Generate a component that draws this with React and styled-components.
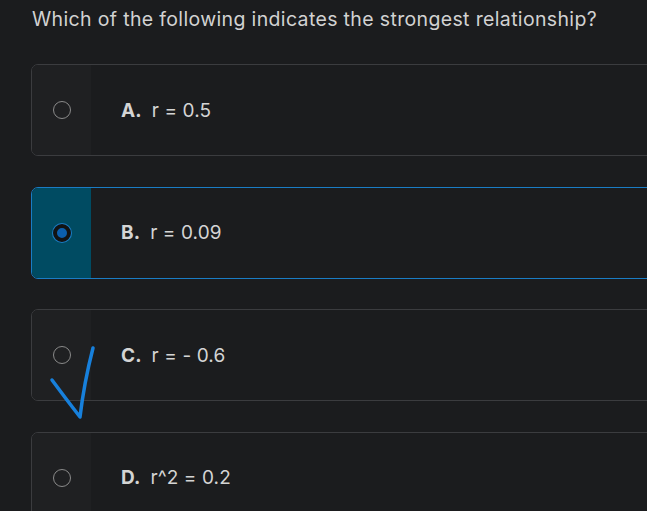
import React from "react";
import styled, { createGlobalStyle } from "styled-components";

const GlobalStyle = createGlobalStyle`
  html, body {
    margin: 0;
    padding: 0;
    background: #1b1c1e;
    overflow: hidden;
  }
`;

const options = [
  { letter: "A.", text: "r = 0.5" },
  { letter: "B.", text: "r = 0.09", selected: true },
  { letter: "C.", text: "r = - 0.6", marked: true },
  { letter: "D.", text: "r^2 = 0.2" },
];

export default function App() {
  return (
    <>
      <GlobalStyle />
      <Page>
        <Question>Which of the following indicates the strongest relationship?</Question>
        <List>
          {options.map((o) => (
            <Card key={o.letter} $selected={o.selected}>
              <RadioCol $selected={o.selected}>
                <Radio $selected={o.selected} />
              </RadioCol>
              <Label>
                <Letter>{o.letter}</Letter>
                {o.text}
              </Label>
              {o.marked && (
                <Check viewBox="0 0 46 72">
                  <path
                    d="M2 33 Q16 52 30 70 Q34 36 43 1"
                    fill="none"
                    stroke="#1780dc"
                    strokeWidth="3.5"
                    strokeLinecap="round"
                    strokeLinejoin="round"
                  />
                </Check>
              )}
            </Card>
          ))}
        </List>
      </Page>
    </>
  );
}

const Page = styled.div`
  width: 647px;
  height: 511px;
  overflow: hidden;
  padding: 6px 0 0 31px;
  box-sizing: border-box;
  font-family: Inter, Roboto, "Liberation Sans", sans-serif;
`;

const Question = styled.div`
  color: #d2d2d2;
  font-size: 19.5px;
  line-height: 26px;
  letter-spacing: 0.35px;
  padding-left: 1px;
  margin-bottom: 32px;
`;

const List = styled.div`
  display: flex;
  flex-direction: column;
  gap: 30.6px;
`;

const Card = styled.div`
  position: relative;
  display: flex;
  align-items: center;
  width: 660px;
  height: 92px;
  box-sizing: border-box;
  border: 1px solid ${(p) => (p.$selected ? "#1a7cc4" : "#3b3c3f")};
  border-radius: 7px;
  background: #1b1c1e;
`;

const RadioCol = styled.div`
  align-self: stretch;
  width: 59px;
  display: flex;
  align-items: center;
  justify-content: center;
  border-radius: 6px 0 0 6px;
  background: ${(p) => (p.$selected ? "#004b62" : "#1f2022")};
`;

const Radio = styled.div`
  width: 18px;
  height: 18px;
  box-sizing: border-box;
  border-radius: 50%;
  ${(p) =>
    p.$selected
      ? `
    background: #0b5fae;
    border: 4px solid #121314;
    box-shadow: 0 0 0 1px #1a7cc4;
  `
      : `
    border: 1px solid #8a8a8a;
  `}
`;

const Label = styled.div`
  margin-left: 30px;
  color: #d4d4d4;
  font-size: 19px;
  letter-spacing: 0.1px;
`;

const Letter = styled.span`
  font-weight: 700;
  margin-right: 10px;
`;

const Check = styled.svg`
  position: absolute;
  left: 18px;
  top: 37px;
  width: 46px;
  height: 72px;
  overflow: visible;
`;
